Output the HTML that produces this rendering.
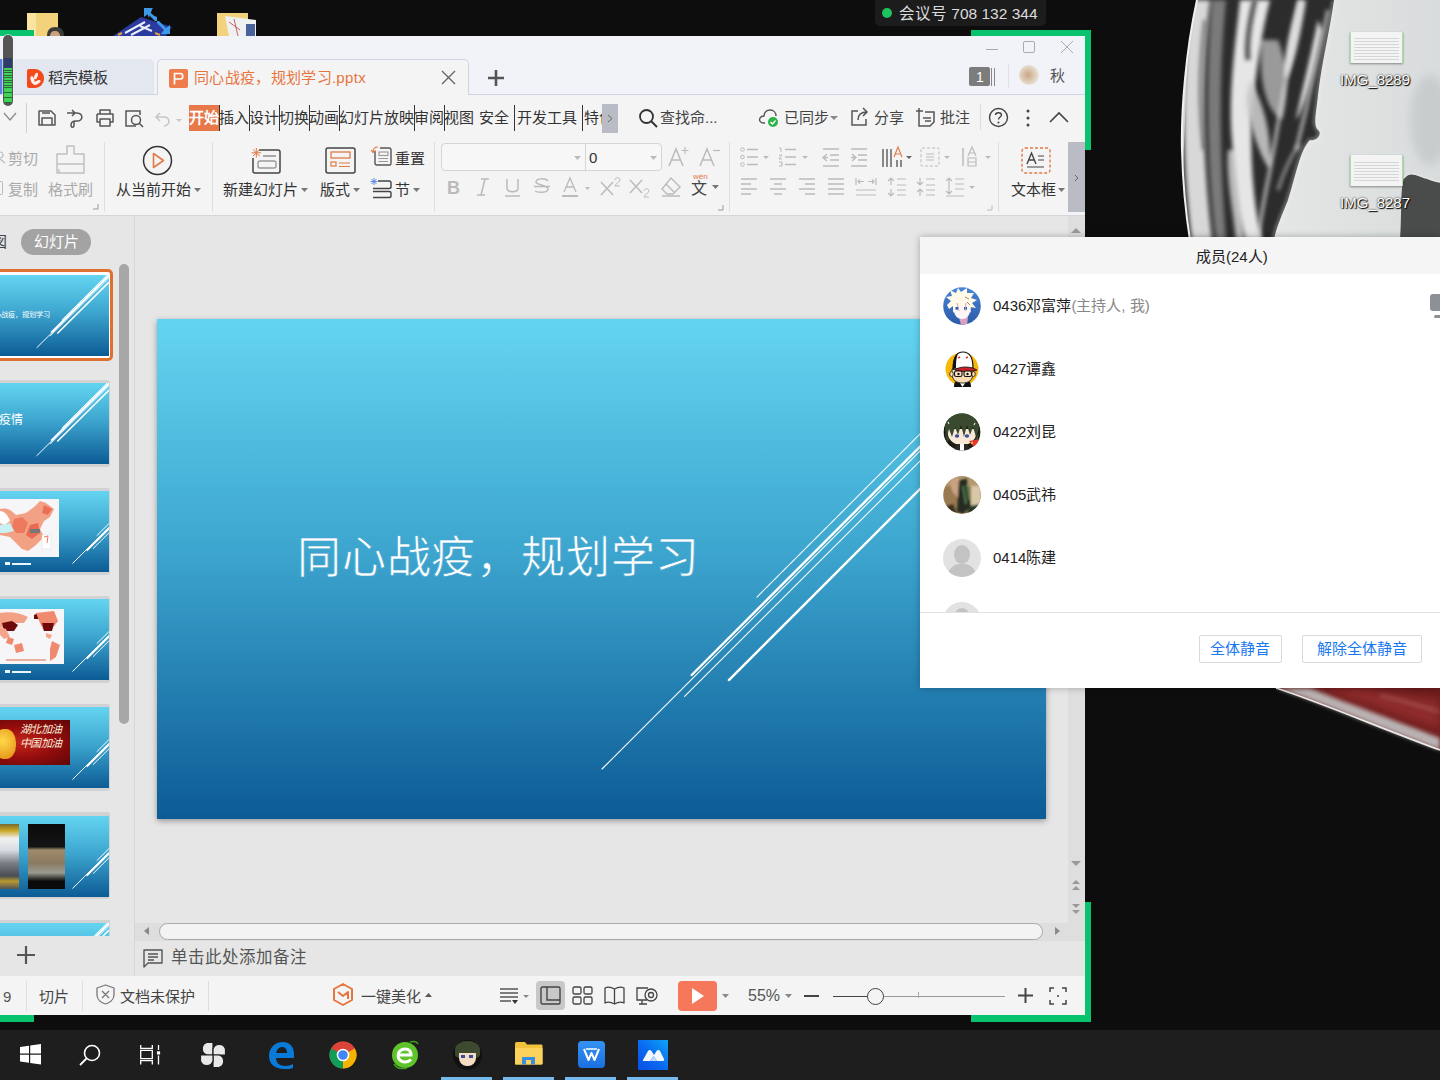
<!DOCTYPE html>
<html lang="zh-CN"><head><meta charset="utf-8">
<style>
*{margin:0;padding:0;box-sizing:border-box}
html,body{width:1440px;height:1080px;overflow:hidden;background:#0d0d0d;font-family:"Liberation Sans",sans-serif;position:relative}
.a{position:absolute}
.t{position:absolute;white-space:nowrap;line-height:1}
svg{position:absolute;overflow:visible}
</style></head><body>

<!-- DESKTOP BG -->
<div class="a" style="left:0;top:0;width:1440px;height:1030px;background:#0d0d0d"></div>
<!-- artwork right -->
<svg style="left:1085px;top:0" width="355" height="1030" viewBox="1085 0 355 1030">
  <defs>
    <clipPath id="sph"><path d="M1197 0 C1186 50 1181 110 1182 150 C1183 190 1186 215 1190 240 L1440 240 L1440 0 Z"/></clipPath>
    <filter id="bl2" x="-20%" y="-20%" width="140%" height="140%"><feGaussianBlur stdDeviation="2"/></filter>
    <filter id="bl4" x="-20%" y="-20%" width="140%" height="140%"><feGaussianBlur stdDeviation="4"/></filter>
    <linearGradient id="lite" x1="0" y1="0" x2="1" y2="0">
      <stop offset="0" stop-color="#c9cccc"/><stop offset="0.4" stop-color="#e4e6e6"/><stop offset="1" stop-color="#d9dcdc"/>
    </linearGradient>
    <linearGradient id="gred" x1="0" y1="0" x2="1" y2="0.4">
      <stop offset="0" stop-color="#cfc9c9"/><stop offset="0.18" stop-color="#9a3a3a"/><stop offset="0.6" stop-color="#8a2424"/><stop offset="1" stop-color="#b04848"/>
    </linearGradient>
  </defs>
  <g clip-path="url(#sph)">
    <rect x="1180" y="0" width="260" height="240" fill="url(#lite)"/>
    <!-- dark streak body -->
    <path d="M1190 0 H1334 C1330 30 1322 60 1318 95 C1316 115 1313 125 1318 130 C1323 134 1316 142 1310 140 C1300 150 1296 175 1288 200 C1282 215 1276 228 1274 240 H1180 Z" fill="#2c2c2c"/>
    <g filter="url(#bl2)">
      <path d="M1192 0 C1183 60 1180 150 1192 240 L1212 240 C1203 160 1200 80 1210 0Z" fill="#d8d8d8"/>
      <path d="M1212 0 C1206 70 1206 160 1216 240 L1226 240 C1220 160 1218 80 1226 0Z" fill="#7a7a7a"/>
      <path d="M1240 0 C1236 40 1228 90 1232 140 C1236 190 1240 215 1246 240 L1262 240 C1252 200 1250 150 1252 110 C1256 70 1262 30 1270 0Z" fill="#e6e6e6"/>
      <path d="M1262 40 C1258 80 1266 110 1282 120 C1290 90 1286 60 1278 40Z" fill="#9a9a9a"/>
      <path d="M1298 0 C1290 30 1282 60 1286 80 C1292 70 1300 40 1306 0Z" fill="#dcdcdc"/>
      <path d="M1318 20 C1310 60 1300 100 1296 120 C1304 110 1314 70 1322 30Z" fill="#e8e8e8"/>
      <path d="M1228 150 C1226 180 1234 215 1236 240 L1244 240 C1240 210 1236 180 1234 150Z" fill="#bcbcbc"/>
    </g>
    <path d="M1334 0 C1330 30 1322 60 1318 95 C1316 115 1313 125 1318 130 C1323 134 1316 142 1310 140 C1300 150 1296 175 1288 200 C1282 215 1276 228 1274 240" stroke="#f4f4f4" stroke-width="1.5" fill="none" filter="url(#bl2)"/>
    <path d="M1328 10 C1322 40 1312 80 1306 110 C1302 125 1300 135 1296 150" stroke="#e0e0e0" stroke-width="2.5" fill="none" filter="url(#bl2)"/>
    <ellipse cx="1430" cy="120" rx="20" ry="45" fill="#b5b9b9" opacity="0.45" filter="url(#bl4)"/>
    <path d="M1400 240 C1402 215 1400 190 1404 178 C1410 170 1418 176 1426 178 C1432 180 1436 182 1440 182 V240Z" fill="#4a4c4c"/>
    <g filter="url(#bl2)" opacity="0.9">
      <path d="M1300 0 C1296 25 1290 55 1286 80 C1280 110 1274 150 1268 180 C1264 200 1260 220 1258 240" stroke="#dedede" stroke-width="3" fill="none"/>
      <path d="M1250 80 C1262 100 1272 130 1270 170 C1262 160 1250 130 1246 100Z" fill="#c8c8c8"/>
      <path d="M1278 190 C1284 170 1294 150 1300 145" stroke="#e0e0e0" stroke-width="2" fill="none"/>
      <path d="M1205 20 C1200 60 1198 100 1204 150" stroke="#5a5a5a" stroke-width="3" fill="none"/>
      <path d="M1255 0 C1250 20 1246 40 1248 60" stroke="#3a3a3a" stroke-width="5" fill="none"/>
    </g>
    <path d="M1404 178 C1410 170 1418 176 1426 178 C1432 180 1436 182 1440 182" stroke="#e6e6e6" stroke-width="1.3" fill="none"/>
    <path d="M1378 240 C1385 222 1395 210 1400 200" stroke="#ddd" stroke-width="1" fill="none"/>
  </g>
  <path d="M1197 0 C1186 50 1181 110 1182 150 C1183 190 1186 215 1190 240" stroke="#f0f0f0" stroke-width="2" fill="none"/>
  <!-- red planet -->
  <path d="M1276 688 C1320 702 1380 728 1440 750 L1440 688 Z" fill="#6e1c1c"/>
  <path d="M1276 688 C1320 702 1380 728 1440 750 L1440 738 C1390 718 1340 700 1310 688Z" fill="#b9b2b2" filter="url(#bl2)"/>
  <path d="M1320 688 C1360 702 1400 716 1440 730 L1440 700 C1410 696 1380 692 1360 688Z" fill="#8e2a2a" filter="url(#bl4)"/>
  <path d="M1380 695 C1400 700 1420 706 1440 712" stroke="#c08080" stroke-width="2" fill="none" opacity="0.6" filter="url(#bl2)"/>
  <path d="M1276 688 C1320 702 1380 728 1440 750" stroke="#e8e8e8" stroke-width="1.8" fill="none"/>
</svg>
<!-- desktop file icons right -->
<div class="a" style="left:1350px;top:32px;width:53px;height:31px;background:#f4f4f4;border-left:1px solid #a6e0a0;border-right:1px solid #a6e0a0;box-shadow:0 1px 2px rgba(0,0,0,.4)"></div>
<div class="a" style="left:1354px;top:36px;width:45px;height:24px;background:repeating-linear-gradient(#f4f4f4 0,#f4f4f4 2px,#d6d6d6 2px,#d6d6d6 3px)"></div>
<div class="t" style="left:1340px;top:72px;font-size:15px;color:#fff;text-shadow:0 0 2px #000,1px 1px 1px #000">IMG_8289</div>
<div class="a" style="left:1350px;top:155px;width:53px;height:31px;background:#f4f4f4;border-left:1px solid #a6e0a0;border-right:1px solid #a6e0a0;box-shadow:0 1px 2px rgba(0,0,0,.4)"></div>
<div class="a" style="left:1354px;top:160px;width:45px;height:23px;background:repeating-linear-gradient(#f4f4f4 0,#f4f4f4 2px,#d6d6d6 2px,#d6d6d6 3px)"></div>
<div class="t" style="left:1340px;top:195px;font-size:15px;color:#fff;text-shadow:0 0 2px #000,1px 1px 1px #000">IMG_8287</div>

<!-- desktop icons top-left -->
<svg style="left:0;top:0" width="300" height="36">
<path d="M27 13 H58 V36 H27Z" fill="#f3d27c"/><path d="M27 13 H36 V36 H27Z" fill="#fbe3a0"/>
<path d="M47 36 C47 30 50 27 55.5 27 C61 27 64 30 64 36Z" fill="#3b3b3b"/><path d="M50 36 C50 33 52 31 55 31 C58 31 60 33 60 36Z" fill="#c9a17a"/>
<path d="M113 36 L141 17 L172 27 L166 36Z" fill="#2b3a9e"/>
<path d="M125 33 L145 22 M131 35 L150 25 M140 26 L152 31" stroke="#e8eef8" stroke-width="2" fill="none"/>
<path d="M118 35 L122 33 M155 33 L160 35" stroke="#e0a040" stroke-width="2"/>
<path d="M145 8 L152 10 L150 14 L157 21 L153 21 L157 21 L157 17 L150 14 L149 18 Z" fill="#3d9ae8"/>
<path d="M144 8 L153 8 L150 12 L157 19 V21 H155 L148 14 L144 17Z" fill="#3d9ae8"/>
<path d="M170 34 L161 34 L164 30 L157 23 V21 H159 L166 28 L170 25Z" fill="#3d9ae8"/>
<path d="M217 13 H248 V36 H217Z" fill="#f3d27c"/>
<path d="M225 16 L256 20 V36 H229Z" fill="#eef0f2"/><path d="M229 22 L240 30 M234 19 L238 36" stroke="#c04040" stroke-width="0.8"/><path d="M246 24 H255 V36 H246Z" fill="#2a4a8a" opacity="0.85"/>
</svg>
<!-- meeting id overlay -->
<div class="a" style="left:875px;top:0;width:171px;height:26px;background:#1c1c1c;border-radius:0 0 5px 5px"></div>
<div class="a" style="left:882px;top:8px;width:10px;height:10px;border-radius:50%;background:#1ec45e"></div>
<div class="t" style="left:899px;top:6px;font-size:15.5px;color:#dcdcdc">会议号 708 132 344</div>

<!-- green share frame -->
<div class="a" style="left:971px;top:30px;width:120px;height:7px;background:#09c26e"></div>
<div class="a" style="left:1085px;top:30px;width:6px;height:120px;background:#09c26e"></div>
<div class="a" style="left:0;top:30px;width:34px;height:7px;background:#09c26e"></div>
<div class="a" style="left:1085px;top:902px;width:6px;height:120px;background:#09c26e"></div>
<div class="a" style="left:971px;top:1015px;width:120px;height:7px;background:#09c26e"></div>
<div class="a" style="left:0;top:1015px;width:34px;height:7px;background:#09c26e"></div>

<!-- WPS WINDOW -->
<div class="a" id="win" style="left:0;top:36px;width:1085px;height:979px;background:#f4f4f4"></div>
<!-- title bar -->
<div class="a" style="left:0;top:36px;width:1085px;height:59px;background:#f1f3f8;border-bottom:1px solid #cdd5e4"></div>

<!-- tabs -->
<div class="a" style="left:13px;top:59px;width:141px;height:35px;background:#e3e7ef;border-radius:5px 5px 0 0"></div>
<div class="a" style="left:27px;top:69px;width:17px;height:19px;background:#f24a1c;border-radius:2px 9px 9px 2px"></div>
<svg style="left:27px;top:69px" width="17" height="19"><ellipse cx="5.5" cy="11" rx="1.8" ry="4" transform="rotate(-15 5.5 11)" fill="#fff" opacity="0.95"/><ellipse cx="9" cy="7" rx="1.6" ry="3.5" transform="rotate(20 9 7)" fill="#fff" opacity="0.9"/><ellipse cx="10" cy="13.5" rx="1.7" ry="4" transform="rotate(60 10 13.5)" fill="#fff" opacity="0.9"/></svg>
<div class="t" style="left:48px;top:70px;font-size:15px;color:#333">稻壳模板</div>
<div class="a" style="left:157px;top:59px;width:312px;height:37px;background:#f4f4f4;border:1px solid #cdd5e4;border-bottom:none;border-radius:5px 5px 0 0"></div>
<div class="a" style="left:169px;top:69px;width:19px;height:19px;background:#ef7d4b;border-radius:2px"></div>
<svg style="left:169px;top:69px" width="19" height="19"><path d="M5.5 15.5 V4.5 H11.5 C14.5 4.5 14.5 10 11.5 10 H5.5" stroke="#fff" stroke-width="1.7" fill="none"/></svg>
<div class="t" style="left:194px;top:70px;font-size:15px;color:#e8743f;letter-spacing:0.32px">同心战疫，规划学习.pptx</div>
<svg style="left:441px;top:70px" width="15" height="15"><path d="M1 1 L14 14 M14 1 L1 14" stroke="#666" stroke-width="1.4"/></svg>
<svg style="left:487px;top:69px" width="18" height="18"><path d="M9 1 V17 M1 9 H17" stroke="#555" stroke-width="2.6"/></svg>
<!-- window controls -->
<div class="a" style="left:986px;top:49px;width:12px;height:1px;background:#aaa"></div>
<div class="a" style="left:1023px;top:41px;width:12px;height:12px;border:1px solid #aaa;border-radius:2px"></div>
<svg style="left:1061px;top:41px" width="12" height="12"><path d="M0 0 L12 12 M12 0 L0 12" stroke="#aaa" stroke-width="1"/></svg>
<div class="a" style="left:969px;top:67px;width:21px;height:19px;background:#7c7c7c;border-radius:2px"></div>
<div class="t" style="left:976px;top:70px;font-size:14px;color:#fff">1</div>
<div class="a" style="left:991px;top:68px;width:1px;height:18px;background:#888"></div>
<div class="a" style="left:994px;top:68px;width:1px;height:18px;background:#888"></div>
<div class="a" style="left:1008px;top:64px;width:1px;height:24px;background:#dde0e6"></div>
<div class="a" style="left:1019px;top:65px;width:20px;height:20px;border-radius:50%;background:radial-gradient(circle at 45% 50%,#caa585,#e9e2d4 70%)"></div>
<div class="t" style="left:1050px;top:68px;font-size:15px;color:#555">秋</div>

<!-- menu row + ribbon -->
<div class="a" style="left:0;top:95px;width:1085px;height:120px;background:#f4f4f4"></div>
<!-- menu row -->
<svg style="left:3px;top:112px" width="14" height="10"><path d="M1 1 L7 8 L13 1" stroke="#888" stroke-width="1.2" fill="none"/></svg>
<div class="a" style="left:26px;top:103px;width:1px;height:30px;background:#d0d0d0"></div>
<svg style="left:37px;top:109px" width="20" height="18"><path d="M2 2 H14 L18 6 V16 H2 Z M5 16 V9 H15 V16 M5 4 H13" stroke="#555" stroke-width="1.5" fill="none" stroke-linejoin="round"/></svg>
<svg style="left:66px;top:109px" width="20" height="19"><path d="M1 4 H9 M6 1 L9 4 L6 7 M9 4 C18 3 18 13 10 12 C6 12 5 14 5 16 C5 19 8 19 8 16 V12" stroke="#555" stroke-width="1.5" fill="none"/></svg>
<svg style="left:95px;top:109px" width="20" height="18"><path d="M5 5 V1 H15 V5 M2 5 H18 V13 H15 M5 13 H2 V5 M5 10 H15 V17 H5 Z" stroke="#555" stroke-width="1.5" fill="none" stroke-linejoin="round"/></svg>
<svg style="left:124px;top:109px" width="21" height="19"><path d="M12 17 H2 V2 H16 V6" stroke="#555" stroke-width="1.5" fill="none"/><circle cx="12" cy="11" r="4.5" stroke="#555" stroke-width="1.5" fill="none"/><path d="M15 14 L19 18" stroke="#555" stroke-width="1.6"/></svg>
<svg style="left:155px;top:111px" width="30" height="16"><path d="M5 2 L1 6 L5 10 M1 6 H9 C15 6 16 14 9 15" stroke="#c6c6c6" stroke-width="1.5" fill="none"/><path d="M21 8 H27 L24 11Z" fill="#c6c6c6"/></svg>
<div class="a" style="left:189px;top:105px;width:30px;height:26px;background:#e8784a"></div>
<div class="t" style="left:189px;top:110px;font-size:15px;color:#fff;font-weight:bold">开始</div>
<div class="t" style="left:219px;top:110px;font-size:15px;color:#333">插入</div>
<div class="t" style="left:249px;top:110px;font-size:15px;color:#333">设计</div>
<div class="t" style="left:279px;top:110px;font-size:15px;color:#333">切换</div>
<div class="t" style="left:309px;top:110px;font-size:15px;color:#333">动画</div>
<div class="t" style="left:339px;top:110px;font-size:15px;color:#333">幻灯片放映</div>
<div class="t" style="left:414px;top:110px;font-size:15px;color:#333">审阅</div>
<div class="t" style="left:444px;top:110px;font-size:15px;color:#333">视图</div>
<div class="t" style="left:479px;top:110px;font-size:15px;color:#333">安全</div>
<div class="t" style="left:517px;top:110px;font-size:15px;color:#333">开发工具</div>
<div class="a" style="left:583px;top:105px;width:19px;height:26px;overflow:hidden"><div class="t" style="left:1px;top:5px;font-size:15px;color:#333">特色</div></div>
<div class="a" style="left:219px;top:105px;width:1px;height:26px;background:#333"></div>
<div class="a" style="left:249px;top:105px;width:1px;height:26px;background:#333"></div>
<div class="a" style="left:279px;top:105px;width:1px;height:26px;background:#333"></div>
<div class="a" style="left:309px;top:105px;width:1px;height:26px;background:#333"></div>
<div class="a" style="left:339px;top:105px;width:1px;height:26px;background:#333"></div>
<div class="a" style="left:414px;top:105px;width:1px;height:26px;background:#333"></div>
<div class="a" style="left:444px;top:105px;width:1px;height:26px;background:#333"></div>
<div class="a" style="left:514px;top:105px;width:1px;height:26px;background:#333"></div>
<div class="a" style="left:582px;top:105px;width:1px;height:26px;background:#333"></div>
<div class="a" style="left:602px;top:104px;width:16px;height:29px;background:#b9bcc4"></div>
<svg style="left:607px;top:114px" width="6" height="9"><path d="M1 1 L5 4.5 L1 8" stroke="#666" stroke-width="1" fill="none"/></svg>
<svg style="left:638px;top:108px" width="22" height="22"><circle cx="8.5" cy="8.5" r="6.5" stroke="#333" stroke-width="1.8" fill="none"/><path d="M13 13 L19 19" stroke="#333" stroke-width="2"/></svg>
<div class="t" style="left:660px;top:110px;font-size:15px;color:#444">查找命...</div>
<svg style="left:759px;top:108px" width="22" height="20"><path d="M6 15 H4 C1 15 0 12 1 10 C2 8 4 8 5 8 C5 4 8 2 11 2 C15 2 17 5 17 8" stroke="#555" stroke-width="1.4" fill="none"/><circle cx="14" cy="14" r="5" fill="#2db34a"/><path d="M11.5 14 L13.5 16 L16.5 12.5" stroke="#fff" stroke-width="1.4" fill="none"/></svg>
<div class="t" style="left:784px;top:110px;font-size:15px;color:#444">已同步</div>
<svg style="left:830px;top:116px" width="8" height="5"><path d="M0 0 H8 L4 4Z" fill="#888"/></svg>
<svg style="left:850px;top:107px" width="20" height="20"><path d="M8 4 H2 V18 H16 V12 M8 13 C8 7 12 5 17 5 M13 1 L17 5 L13 9" stroke="#555" stroke-width="1.5" fill="none"/></svg>
<div class="t" style="left:874px;top:110px;font-size:15px;color:#444">分享</div>
<svg style="left:916px;top:107px" width="22" height="22"><path d="M3 6 V19 H14 L18 15 V5 H9 M3 1 V9 M0 4 H7 M7 11 H15 M9 14 H15" stroke="#555" stroke-width="1.5" fill="none"/></svg>
<div class="t" style="left:940px;top:110px;font-size:15px;color:#444">批注</div>
<div class="a" style="left:980px;top:104px;width:1px;height:26px;background:#dcdcdc"></div>
<svg style="left:988px;top:107px" width="21" height="21"><circle cx="10.5" cy="10.5" r="9" stroke="#444" stroke-width="1.4" fill="none"/><path d="M7.5 8 C7.5 5 13.5 5 13.5 8 C13.5 10 10.5 10 10.5 12.5" stroke="#444" stroke-width="1.4" fill="none"/><circle cx="10.5" cy="15.5" r="1" fill="#444"/></svg>
<svg style="left:1026px;top:108px" width="4" height="20"><circle cx="2" cy="3" r="1.5" fill="#444"/><circle cx="2" cy="10" r="1.5" fill="#444"/><circle cx="2" cy="17" r="1.5" fill="#444"/></svg>
<svg style="left:1049px;top:111px" width="20" height="12"><path d="M1 11 L10 2 L19 11" stroke="#444" stroke-width="1.6" fill="none"/></svg>


<!-- RIBBON -->
<!-- group1 clipboard -->
<svg style="left:0px;top:151px" width="6" height="14"><circle cx="0" cy="4" r="3" stroke="#bbb" stroke-width="1.2" fill="none"/><path d="M0 8 L5 12" stroke="#bbb" stroke-width="1.2"/></svg>
<div class="t" style="left:8px;top:151px;font-size:15px;color:#aaa">剪切</div>
<div class="a" style="left:0px;top:181px;width:3px;height:14px;border:1.2px solid #bbb;border-left:none;border-radius:0 2px 2px 0"></div>
<div class="t" style="left:8px;top:182px;font-size:15px;color:#aaa">复制</div>
<svg style="left:55px;top:145px" width="31" height="30"><path d="M12 1 H19 V9 H29 V19 H2 V9 H12 Z M2 19 V28 H29 V19 M4 28 V24" stroke="#c0c0c0" stroke-width="1.5" fill="none" stroke-linejoin="round"/></svg>
<div class="t" style="left:48px;top:182px;font-size:15px;color:#aaa">格式刷</div>
<svg style="left:93px;top:204px" width="6" height="6"><path d="M5 0 V5 H0" stroke="#999" stroke-width="1" fill="none"/></svg>
<div class="a" style="left:104px;top:142px;width:1px;height:70px;background:#dedede"></div>
<!-- group2 -->
<svg style="left:142px;top:145px" width="31" height="31"><circle cx="15.5" cy="15.5" r="14" stroke="#333" stroke-width="1.5" fill="none"/><path d="M11.5 8.5 L21.5 15.5 L11.5 22.5 Z" stroke="#e07a47" stroke-width="1.6" fill="none" stroke-linejoin="round"/></svg>
<div class="t" style="left:116px;top:182px;font-size:15px;color:#333">从当前开始</div>
<svg style="left:194px;top:188px" width="7" height="4"><path d="M0 0 H7 L3.5 4Z" fill="#777"/></svg>
<div class="a" style="left:212px;top:142px;width:1px;height:70px;background:#dedede"></div>
<!-- group3 -->
<svg style="left:249px;top:146px" width="34" height="29"><path d="M10 4 H29 Q31 4 31 6 V25 Q31 27 29 27 H6 Q4 27 4 25 V12" stroke="#444" stroke-width="1.5" fill="none"/><path d="M14 10 H27" stroke="#777" stroke-width="1.2"/><rect x="9" y="15" width="18" height="7" rx="2" stroke="#999" stroke-width="1.4" fill="none"/><path d="M7.3 2 V11.6 M2.5 6.8 H12.1 M3.9 3.4 L10.7 10.2 M10.7 3.4 L3.9 10.2" stroke="#e07a47" stroke-width="1"/></svg>
<div class="t" style="left:223px;top:182px;font-size:15px;color:#333">新建幻灯片</div>
<svg style="left:301px;top:188px" width="7" height="4"><path d="M0 0 H7 L3.5 4Z" fill="#777"/></svg>
<svg style="left:325px;top:147px" width="31" height="27"><rect x="1" y="1" width="29" height="25" rx="2" stroke="#444" stroke-width="1.5" fill="none"/><rect x="6" y="5" width="19" height="6" stroke="#e07a47" stroke-width="1.3" fill="none"/><rect x="6" y="15" width="5" height="4" stroke="#e07a47" stroke-width="1.2" fill="none"/><path d="M14 16 H25 M14 19.5 H25" stroke="#e07a47" stroke-width="1.2"/></svg>
<div class="t" style="left:320px;top:182px;font-size:15px;color:#333">版式</div>
<svg style="left:353px;top:188px" width="7" height="4"><path d="M0 0 H7 L3.5 4Z" fill="#777"/></svg>
<svg style="left:370px;top:145px" width="24" height="22"><path d="M5 6 V18 Q5 20 7 20 H20 Q21 20 21 18 V5 Q21 3 19 3 H10" stroke="#555" stroke-width="1.4" fill="none"/><rect x="9" y="7" width="9" height="3.5" stroke="#999" stroke-width="1.1" fill="none"/><path d="M8.5 13.5 H18 M8.5 16.5 H18" stroke="#999" stroke-width="1.1"/><path d="M8 2 C5 2 3 3.5 3 7 M1 5 L3 7.5 L5.5 5.5" stroke="#e07a47" stroke-width="1.2" fill="none"/></svg>
<div class="t" style="left:395px;top:151px;font-size:15px;color:#333">重置</div>
<svg style="left:370px;top:177px" width="24" height="22"><path d="M8 4 H19 Q21 4 21 6 V10 Q21 11.5 19 11.5 H3 M3 14.5 H19 Q21 14.5 21 16 V19 Q21 20.5 19 20.5 H3" stroke="#444" stroke-width="1.4" fill="none"/><path d="M4 1 V8 M0.5 4.5 H7.5 M1.5 2 L6.5 7 M6.5 2 L1.5 7" stroke="#4a82e0" stroke-width="0.9"/></svg>
<div class="t" style="left:395px;top:182px;font-size:15px;color:#333">节</div>
<svg style="left:413px;top:188px" width="7" height="4"><path d="M0 0 H7 L3.5 4Z" fill="#777"/></svg>
<div class="a" style="left:434px;top:142px;width:1px;height:70px;background:#dedede"></div>
<!-- group4 font -->
<div class="a" style="left:441px;top:143px;width:221px;height:28px;border:1px solid #d5d5d5;border-radius:4px;background:#f7f7f7"></div>
<div class="a" style="left:585px;top:144px;width:1px;height:26px;background:#d5d5d5"></div>
<svg style="left:574px;top:156px" width="7" height="4"><path d="M0 0 H7 L3.5 4Z" fill="#bbb"/></svg>
<svg style="left:650px;top:156px" width="7" height="4"><path d="M0 0 H7 L3.5 4Z" fill="#bbb"/></svg>
<div class="t" style="left:589px;top:150px;font-size:15px;color:#333">0</div>
<svg style="left:668px;top:146px" width="22" height="22"><path d="M1 20 L8 3 L15 20 M4 14 H12" stroke="#bbb" stroke-width="1.5" fill="none"/><path d="M17 1 V8 M13.5 4.5 H20.5" stroke="#bbb" stroke-width="1.2"/></svg>
<svg style="left:699px;top:146px" width="22" height="22"><path d="M1 20 L8 3 L15 20 M4 14 H12" stroke="#bbb" stroke-width="1.5" fill="none"/><path d="M14 4.5 H21" stroke="#bbb" stroke-width="1.2"/></svg>
<div class="t" style="left:447px;top:179px;font-size:18px;font-weight:bold;color:#bbb">B</div>
<svg style="left:476px;top:178px" width="14" height="18"><path d="M5 1 H13 M1 17 H9 M9 1 L5 17" stroke="#bbb" stroke-width="1.5" fill="none"/></svg>
<svg style="left:504px;top:178px" width="17" height="19"><path d="M3 1 V10 C3 15 14 15 14 10 V1 M1 18 H16" stroke="#bbb" stroke-width="1.5" fill="none"/></svg>
<svg style="left:533px;top:178px" width="18" height="18"><path d="M15 3 C13 0 3 0 3 4 C3 7 15 7 15 11 C15 15 5 15 2 13 M1 8.5 H17" stroke="#bbb" stroke-width="1.5" fill="none"/></svg>
<svg style="left:561px;top:177px" width="30" height="21"><path d="M3 15 L9 1 L15 15 M5 10 H13" stroke="#bbb" stroke-width="1.3" fill="none"/><path d="M1 19 H17" stroke="#bbb" stroke-width="2"/><path d="M24 10 H29 L26.5 13Z" fill="#bbb"/></svg>
<svg style="left:600px;top:177px" width="22" height="20"><path d="M1 5 L13 18 M13 5 L1 18" stroke="#bbb" stroke-width="1.5"/><path d="M15 3 C15 0 20 0 20 3 C20 5 15 7 15 9 H20" stroke="#bbb" stroke-width="1" fill="none"/></svg>
<svg style="left:629px;top:177px" width="22" height="21"><path d="M1 3 L13 16 M13 3 L1 16" stroke="#bbb" stroke-width="1.5"/><path d="M15 14 C15 11 20 11 20 14 C20 16 15 18 15 20 H20" stroke="#bbb" stroke-width="1" fill="none"/></svg>
<svg style="left:660px;top:177px" width="22" height="20"><path d="M11 1 L20 10 L13 17 H7 L2 12 Z M6 7 L14 15 M2 19 H20" stroke="#bbb" stroke-width="1.4" fill="none"/></svg>
<div class="t" style="left:693px;top:173px;font-size:8px;color:#e07a47">wén</div>
<div class="t" style="left:691px;top:181px;font-size:16px;color:#444">文</div>
<svg style="left:712px;top:185px" width="7" height="4"><path d="M0 0 H7 L3.5 4Z" fill="#777"/></svg>
<svg style="left:718px;top:205px" width="6" height="6"><path d="M5 0 V5 H0" stroke="#999" stroke-width="1" fill="none"/></svg>
<div class="a" style="left:729px;top:142px;width:1px;height:70px;background:#dedede"></div>
<!-- group5 paragraph -->
<svg style="left:740px;top:147px" width="32" height="20"><circle cx="2.5" cy="2.5" r="1.8" stroke="#bbb" fill="none"/><circle cx="2.5" cy="10" r="1.8" stroke="#bbb" fill="none"/><circle cx="2.5" cy="17.5" r="1.8" stroke="#bbb" fill="none"/><path d="M7 2.5 H18 M7 10 H18 M7 17.5 H18" stroke="#bbb" stroke-width="1.4"/><path d="M23 9 H29 L26 12Z" fill="#bbb"/></svg>
<svg style="left:778px;top:147px" width="32" height="20"><path d="M1 1 H3 V5 M1 8 H4 L1 12 H4 M1 15 H4 V19 H1 M3 17 H4" stroke="#bbb" stroke-width="1" fill="none"/><path d="M7 2.5 H18 M7 10 H18 M7 17.5 H18" stroke="#bbb" stroke-width="1.4"/><path d="M24 9 H30 L27 12Z" fill="#bbb"/></svg>
<svg style="left:822px;top:148px" width="18" height="19"><path d="M1 1 H17 M8 7 H17 M8 12 H17 M1 18 H17 M5 6 L1 9.5 L5 13 M1 9.5 H6" stroke="#bbb" stroke-width="1.3" fill="none"/></svg>
<svg style="left:850px;top:148px" width="18" height="19"><path d="M1 1 H17 M8 7 H17 M8 12 H17 M1 18 H17 M2 6 L6 9.5 L2 13 M1 9.5 H6" stroke="#bbb" stroke-width="1.3" fill="none"/></svg>
<svg style="left:881px;top:146px" width="33" height="22"><path d="M2 3 V21 M6 3 V21 M10 3 V21 M16 14 V21 M20 14 V21" stroke="#666" stroke-width="1.5"/><path d="M13 11 L17 1 L21 11 M14.5 8 H19.5" stroke="#e07a47" stroke-width="1.1" fill="none"/><path d="M25 10 H31 L28 13Z" fill="#666"/></svg>
<svg style="left:920px;top:147px" width="31" height="20"><rect x="1" y="1" width="18" height="18" rx="1" stroke="#bbb" stroke-dasharray="3 2" fill="none"/><path d="M6 7 H14 M6 10 H14 M6 13 H14" stroke="#bbb" stroke-width="1.2"/><path d="M24 9 H30 L27 12Z" fill="#bbb"/></svg>
<svg style="left:961px;top:146px" width="32" height="21"><path d="M2 2 V20" stroke="#bbb" stroke-width="1.5"/><path d="M7 10 L11 1 L15 10 M8.5 7 H13.5 M7 12 H15 V20 H7 Z M7 16 H15" stroke="#bbb" stroke-width="1.2" fill="none"/><path d="M24 10 H30 L27 13Z" fill="#bbb"/></svg>
<svg style="left:740px;top:178px" width="18" height="18"><path d="M1 1 H17 M1 6 H11 M1 11 H17 M1 16 H11" stroke="#bbb" stroke-width="1.4"/></svg>
<svg style="left:769px;top:178px" width="18" height="18"><path d="M1 1 H17 M5 6 H13 M1 11 H17 M5 16 H13" stroke="#bbb" stroke-width="1.4"/></svg>
<svg style="left:798px;top:178px" width="18" height="18"><path d="M1 1 H17 M7 6 H17 M1 11 H17 M7 16 H17" stroke="#bbb" stroke-width="1.4"/></svg>
<svg style="left:827px;top:178px" width="18" height="18"><path d="M1 1 H17 M1 6 H17 M1 11 H17 M1 16 H17" stroke="#bbb" stroke-width="1.4"/></svg>
<svg style="left:855px;top:177px" width="22" height="20"><path d="M1 1 V8 M21 1 V8 M3 4.5 H9 M5 2.5 L3 4.5 L5 6.5 M13 4.5 H19 M17 2.5 L19 4.5 L17 6.5 M1 13 H21 M1 18 H21" stroke="#bbb" stroke-width="1.2" fill="none"/></svg>
<svg style="left:887px;top:177px" width="20" height="20"><path d="M4 1 V8 M1 4 L4 1 L7 4 M4 12 V19 M1 16 L4 19 L7 16 M10 2 H19 M10 8 H19 M10 13 H19 M10 18 H19" stroke="#bbb" stroke-width="1.2" fill="none"/></svg>
<svg style="left:916px;top:177px" width="20" height="20"><path d="M4 1 V8 M1 5 L4 8 L7 5 M4 12 V19 M1 15 L4 12 L7 15 M10 2 H19 M10 8 H19 M10 13 H19 M10 18 H19" stroke="#bbb" stroke-width="1.2" fill="none"/></svg>
<svg style="left:945px;top:177px" width="32" height="20"><path d="M4 1 V17 M1 4 L4 1 L7 4 M1 14 L4 17 L7 14 M10 2 H19 M10 7 H19 M10 12 H19 M1 19 H19" stroke="#bbb" stroke-width="1.2" fill="none"/><path d="M24 9 H30 L27 12Z" fill="#bbb"/></svg>
<svg style="left:987px;top:205px" width="6" height="6"><path d="M5 0 V5 H0" stroke="#bbb" stroke-width="1" fill="none"/></svg>
<div class="a" style="left:998px;top:142px;width:1px;height:70px;background:#dedede"></div>
<!-- group6 textbox -->
<svg style="left:1021px;top:147px" width="30" height="27"><rect x="1" y="1" width="28" height="25" rx="3" stroke="#e07a47" stroke-width="1.4" stroke-dasharray="3 2" fill="none"/><path d="M6 17 L10.5 6 L15 17 M7.5 13 H13.5" stroke="#444" stroke-width="1.4" fill="none"/><path d="M17 9 H23 M17 13 H23 M6 20 H23" stroke="#444" stroke-width="1.2"/></svg>
<div class="t" style="left:1011px;top:182px;font-size:15px;color:#333">文本框</div>
<svg style="left:1058px;top:188px" width="7" height="4"><path d="M0 0 H7 L3.5 4Z" fill="#777"/></svg>
<div class="a" style="left:1068px;top:142px;width:17px;height:70px;background:#b9bcc4"></div>
<svg style="left:1074px;top:174px" width="5" height="8"><path d="M1 1 L4 4 L1 7" stroke="#666" stroke-width="1" fill="none"/></svg>

<!-- main area -->
<div class="a" style="left:0;top:215px;width:1085px;height:761px;background:#e6e6e6;border-top:1px solid #d6d6d6"></div>

<!-- slide -->
<div class="a" style="left:157px;top:319px;width:889px;height:500px;background:linear-gradient(#64d5f1,#3ea7d0 45%,#0c5b95);box-shadow:0 2px 6px rgba(0,0,0,.35)"></div>

<!-- status bar -->
<div class="a" style="left:0;top:976px;width:1085px;height:39px;background:#f4f4f4"></div>


<!-- LEFT PANE -->
<div class="a" style="left:134px;top:216px;width:1px;height:760px;background:#d6d6d6"></div>
<div class="t" style="left:-8px;top:234px;font-size:15px;color:#444">図</div>
<div class="a" style="left:21px;top:229px;width:70px;height:26px;border-radius:13px;background:#a3a3a3"></div>
<div class="t" style="left:34px;top:234px;font-size:15px;color:#fff">幻灯片</div>
<div class="a" style="left:119px;top:264px;width:10px;height:460px;border-radius:5px;background:#a7a7a7"></div>
<!-- thumbnails -->
<div class="a" style="left:-10px;top:269px;width:123px;height:92px;border:3px solid #e0702f;border-radius:5px;background:#fff"></div>
<div class="a" style="left:0;top:380px;width:110px;height:87px;background:#d2d2d2;border-radius:0 3px 3px 0"></div>
<div class="a" style="left:0;top:488px;width:110px;height:87px;background:#d2d2d2;border-radius:0 3px 3px 0"></div>
<div class="a" style="left:0;top:596px;width:110px;height:87px;background:#d2d2d2;border-radius:0 3px 3px 0"></div>
<div class="a" style="left:0;top:704px;width:110px;height:87px;background:#d2d2d2;border-radius:0 3px 3px 0"></div>
<div class="a" style="left:0;top:812px;width:110px;height:87px;background:#d2d2d2;border-radius:0 3px 3px 0"></div>
<div class="a" style="left:0;top:920px;width:110px;height:16px;background:#d2d2d2"></div>
<div class="a" style="left:-36.5px;top:275px;width:145px;height:81px;overflow:hidden"><div class="a" style="left:0;top:0;width:145px;height:81px;background:linear-gradient(#64d5f1,#3ea7d0 45%,#0c5b95)"></div><svg style="left:0;top:0" width="145" height="81" viewBox="0 0 889 500" preserveAspectRatio="none"><g stroke="#fff" fill="none"><path d="M445 450 L889 6" stroke-width="6"/><path d="M534.7 356 L889 1.7" stroke-width="12"/><path d="M527.6 377.4 L889 16" stroke-width="6"/><path d="M571.9 361.1 L889 44" stroke-width="9"/><path d="M599.9 278.1 L889 -11" stroke-width="6"/></g></svg><div class="t" style="left:23px;top:36px;font-size:7.2px;color:#fff">同心战疫，规划学习</div></div><div class="a" style="left:-36.5px;top:383px;width:145px;height:81px;overflow:hidden"><div class="a" style="left:0;top:0;width:145px;height:81px;background:linear-gradient(#64d5f1,#3ea7d0 45%,#0c5b95)"></div><svg style="left:0;top:0" width="145" height="81" viewBox="0 0 889 500" preserveAspectRatio="none"><g stroke="#fff" fill="none"><path d="M445 450 L889 6" stroke-width="6"/><path d="M534.7 356 L889 1.7" stroke-width="12"/><path d="M527.6 377.4 L889 16" stroke-width="6"/><path d="M571.9 361.1 L889 44" stroke-width="9"/><path d="M599.9 278.1 L889 -11" stroke-width="6"/></g></svg><div class="t" style="left:23.5px;top:31px;font-size:12px;color:#fff">看疫情</div></div><div class="a" style="left:-36.5px;top:491px;width:145px;height:81px;overflow:hidden"><div class="a" style="left:0;top:0;width:145px;height:81px;background:linear-gradient(#64d5f1,#3ea7d0 45%,#0c5b95)"></div><svg style="left:0;top:0" width="145" height="81" viewBox="0 0 889 500" preserveAspectRatio="none"><g stroke="#fff" fill="none"><path d="M665 448 L889 224" stroke-width="6"/><path d="M752 368 L889 231" stroke-width="12"/><path d="M791 356 L889 258" stroke-width="6"/><path d="M814 276 L889 201" stroke-width="6"/></g></svg><div class="a" style="left:36.5px;top:7.5px;width:59px;height:58px;background:#f6f6f8;overflow:hidden"><svg style="left:0;top:0" width="59" height="58"><path d="M0 10 C8 8 12 12 16 16 L26 14 L34 8 L40 2 L46 4 L54 10 L50 18 L44 22 L40 30 L44 38 L36 46 L28 52 L22 50 L16 44 L10 38 L0 36Z" fill="#f3a184"/><path d="M14 20 L22 18 L28 24 L24 34 L16 34 L12 28Z" fill="#ee7a5e"/><path d="M30 26 L38 24 L40 34 L32 40 L26 36Z" fill="#e96a52"/><path d="M44 6 L52 10 L48 16 L42 14Z" fill="#ea6f55"/><path d="M0 12 C4 12 8 16 10 22 L4 26 L0 24Z" fill="#fff"/><path d="M0 26 L10 24 L14 32 L6 34 L0 34Z" fill="#c8f1f4"/><rect x="30" y="30" width="10" height="4" fill="#777"/><rect x="42" y="36" width="9" height="14" fill="#fff" stroke="#ddd" stroke-width="0.5"/><path d="M44 38 L48 37 L47 44" stroke="#ee7a5e" stroke-width="1" fill="none"/></svg></div><div class="a" style="left:41px;top:71px;width:5px;height:3px;background:#eaf6fb"></div><div class="a" style="left:48px;top:71.5px;width:19px;height:2px;background:#eaf6fb"></div></div><div class="a" style="left:-36.5px;top:599px;width:145px;height:81px;overflow:hidden"><div class="a" style="left:0;top:0;width:145px;height:81px;background:linear-gradient(#64d5f1,#3ea7d0 45%,#0c5b95)"></div><svg style="left:0;top:0" width="145" height="81" viewBox="0 0 889 500" preserveAspectRatio="none"><g stroke="#fff" fill="none"><path d="M665 448 L889 224" stroke-width="6"/><path d="M752 368 L889 231" stroke-width="12"/><path d="M791 356 L889 258" stroke-width="6"/><path d="M814 276 L889 201" stroke-width="6"/></g></svg><div class="a" style="left:36.5px;top:9.5px;width:64px;height:55px;background:#f6f6f8;overflow:hidden"><svg style="left:0;top:0" width="64" height="55"><path d="M0 4 C10 2 20 4 28 8 L24 14 L16 14 L8 20 L0 18Z" fill="#f3a184"/><path d="M2 14 L12 12 L18 16 L14 22 L4 22Z" fill="#6e0a0a"/><path d="M0 18 L6 20 L10 28 L4 30 L0 26Z" fill="#f4a58a"/><path d="M8 28 L14 30 L12 36 L6 34Z" fill="#f08a6e"/><path d="M14 36 L22 34 L24 42 L16 44Z" fill="#f08a6e"/><path d="M34 6 L38 4 L40 10 L34 10Z" fill="#6e0a0a"/><path d="M36 4 L54 2 L58 12 L52 20 L44 22 L40 14Z" fill="#f08a6e"/><path d="M42 14 L54 14 L52 22 L44 22Z" fill="#6e0a0a"/><path d="M46 24 L52 26 L50 30 L46 28Z" fill="#f4a58a"/><path d="M52 32 L60 36 L56 48 L50 52 L50 40Z" fill="#f08a6e"/><rect x="6" y="50" width="40" height="2" fill="#e9b0a0"/></svg></div><div class="a" style="left:41px;top:71px;width:5px;height:3px;background:#eaf6fb"></div><div class="a" style="left:48px;top:71.5px;width:19px;height:2px;background:#eaf6fb"></div></div><div class="a" style="left:-36.5px;top:707px;width:145px;height:81px;overflow:hidden"><div class="a" style="left:0;top:0;width:145px;height:81px;background:linear-gradient(#64d5f1,#3ea7d0 45%,#0c5b95)"></div><svg style="left:0;top:0" width="145" height="81" viewBox="0 0 889 500" preserveAspectRatio="none"><g stroke="#fff" fill="none"><path d="M665 448 L889 224" stroke-width="6"/><path d="M752 368 L889 231" stroke-width="12"/><path d="M791 356 L889 258" stroke-width="6"/><path d="M814 276 L889 201" stroke-width="6"/></g></svg><div class="a" style="left:36.5px;top:13px;width:70px;height:45px;background:radial-gradient(ellipse at 30% 50%,#c4281a 0,#9a0e0e 45%,#5e0606 100%)"></div><div class="a" style="left:30px;top:22px;width:22px;height:30px;border-radius:45%;background:radial-gradient(circle at 40% 40%,#ffd84a,#e08a10)"></div><div class="t" style="left:56px;top:17px;font-size:11px;color:#f6eedd;font-style:italic;letter-spacing:-0.5px">湖北加油</div><div class="t" style="left:56px;top:31px;font-size:11px;color:#f6eedd;font-style:italic;letter-spacing:-0.5px">中国加油</div></div><div class="a" style="left:-36.5px;top:816px;width:145px;height:81px;overflow:hidden"><div class="a" style="left:0;top:0;width:145px;height:81px;background:linear-gradient(#64d5f1,#3ea7d0 45%,#0c5b95)"></div><svg style="left:0;top:0" width="145" height="81" viewBox="0 0 889 500" preserveAspectRatio="none"><g stroke="#fff" fill="none"><path d="M665 448 L889 224" stroke-width="6"/><path d="M752 368 L889 231" stroke-width="12"/><path d="M791 356 L889 258" stroke-width="6"/><path d="M814 276 L889 201" stroke-width="6"/></g></svg><div class="a" style="left:36.5px;top:8px;width:19px;height:65px;background:linear-gradient(#7a6a30 0,#c9a520 10%,#f0f0f0 22%,#d8dde2 40%,#7a7f86 60%,#4a4d52 80%,#b89a30 88%,#555 100%)"></div><div class="a" style="left:64.5px;top:8px;width:37px;height:65px;background:linear-gradient(#0b0b0b 0,#141414 35%,#a08a6a 40%,#8a7a62 60%,#9a9a90 75%,#0b0b0b 88%)"></div></div><div class="a" style="left:-36.5px;top:923px;width:145px;height:13px;overflow:hidden"><div class="a" style="left:0;top:0;width:145px;height:81px;background:linear-gradient(#64d5f1,#3ea7d0 45%,#0c5b95)"></div><svg style="left:0;top:0" width="145" height="81" viewBox="0 0 889 500" preserveAspectRatio="none"><g stroke="#fff" fill="none"><path d="M445 450 L889 6" stroke-width="6"/><path d="M534.7 356 L889 1.7" stroke-width="12"/><path d="M527.6 377.4 L889 16" stroke-width="6"/><path d="M571.9 361.1 L889 44" stroke-width="9"/><path d="M599.9 278.1 L889 -11" stroke-width="6"/></g></svg></div>
<svg style="left:16px;top:945px" width="20" height="20"><path d="M10 1 V19 M1 10 H19" stroke="#555" stroke-width="2.2"/></svg>

<!-- SLIDE content -->
<div class="a" style="left:157px;top:319px;width:889px;height:500px;overflow:hidden">
<svg style="left:0;top:0" width="889" height="500"><g stroke="#fff" fill="none" stroke-linecap="round">
<path d="M445 450 L889 6" stroke-width="1.1"/>
<path d="M534.7 356 L889 1.7" stroke-width="2.4"/>
<path d="M527.6 377.4 L889 16" stroke-width="1.1"/>
<path d="M571.9 361.1 L889 44" stroke-width="2.4"/>
<path d="M599.9 278.1 L889 -11" stroke-width="1.1"/>
</g></svg>
<div class="t" style="left:140px;top:217px;font-size:44px;color:#fff;font-weight:300;letter-spacing:0.8px;-webkit-text-stroke:0.7px #3ca4ce">同心战疫，规划学习</div>
</div>

<!-- vertical scrollbar right -->
<div class="a" style="left:1068px;top:216px;width:17px;height:707px;background:#dedede"></div>
<svg style="left:1070px;top:226px" width="12" height="8"><path d="M1 7 H11 L6 2Z" fill="#999"/></svg>
<svg style="left:1070px;top:860px" width="12" height="8"><path d="M1 1 H11 L6 6Z" fill="#999"/></svg>
<svg style="left:1070px;top:879px" width="12" height="12"><path d="M2 5 H10 L6 1Z M2 11 H10 L6 7Z" fill="#999"/></svg>
<svg style="left:1070px;top:903px" width="12" height="12"><path d="M2 1 H10 L6 5Z M2 7 H10 L6 11Z" fill="#999"/></svg>
<!-- horizontal scrollbar -->
<div class="a" style="left:135px;top:923px;width:950px;height:18px;background:#dedede"></div>
<div class="a" style="left:159px;top:923px;width:884px;height:17px;border-radius:9px;background:#f3f3f3;border:1px solid #a8a8a8"></div>
<svg style="left:143px;top:926px" width="8" height="10"><path d="M6 1 V9 L1 5Z" fill="#888"/></svg>
<svg style="left:1053px;top:926px" width="8" height="10"><path d="M2 1 V9 L7 5Z" fill="#888"/></svg>
<!-- notes -->
<svg style="left:142px;top:948px" width="22" height="21"><path d="M2 2 H20 V15 H6 L2 19 Z M6 6 H16 M6 9 H16 M6 12 H12" stroke="#555" stroke-width="1.4" fill="none" stroke-linejoin="round"/></svg>
<div class="t" style="left:171px;top:949px;font-size:16.5px;color:#555">单击此处添加备注</div>

<!-- STATUS BAR -->
<div class="t" style="left:3px;top:989px;font-size:15px;color:#555">9</div>
<div class="a" style="left:26px;top:981px;width:1px;height:30px;background:#dedede"></div>
<div class="t" style="left:39px;top:989px;font-size:15px;color:#444">切片</div>
<div class="a" style="left:82px;top:981px;width:1px;height:30px;background:#dedede"></div>
<svg style="left:96px;top:984px" width="19" height="21"><path d="M9.5 1 L18 4 V11 C18 16 13 19 9.5 20 C6 19 1 16 1 11 V4 Z M6 7 L13 14 M13 7 L6 14" stroke="#777" stroke-width="1.3" fill="none" stroke-linejoin="round"/></svg>
<div class="t" style="left:120px;top:989px;font-size:15px;color:#444">文档未保护</div>
<div class="a" style="left:208px;top:981px;width:1px;height:30px;background:#dedede"></div>
<svg style="left:332px;top:983px" width="22" height="24"><path d="M11 1 L20 6 V17 L11 22 L2 17 V6 Z M6 9 L11 13 L16 9 V16" stroke="#e8743f" stroke-width="2" fill="none" stroke-linejoin="round"/></svg>
<div class="t" style="left:361px;top:989px;font-size:15px;color:#444">一键美化</div>
<svg style="left:425px;top:993px" width="7" height="5"><path d="M0 4 H7 L3.5 0Z" fill="#555"/></svg>
<svg style="left:499px;top:987px" width="32" height="18"><path d="M1 2 H19 M1 6 H19 M1 10 H19 M1 14 H12" stroke="#555" stroke-width="1.4"/><path d="M13 13 H19 L16 17Z" fill="#333"/><path d="M24 8 H30 L27 11Z" fill="#888"/></svg>
<div class="a" style="left:536px;top:981px;width:29px;height:29px;border-radius:4px;background:#c8c8c8"></div>
<svg style="left:540px;top:986px" width="21" height="19"><rect x="1" y="1" width="19" height="17" rx="1.5" stroke="#444" stroke-width="1.4" fill="none"/><path d="M7 1 V14 H20" stroke="#444" stroke-width="1.4" fill="none"/></svg>
<svg style="left:572px;top:986px" width="21" height="19"><rect x="1" y="1" width="8" height="7" rx="1.5" stroke="#444" stroke-width="1.3" fill="none"/><rect x="12" y="1" width="8" height="7" rx="1.5" stroke="#444" stroke-width="1.3" fill="none"/><rect x="1" y="11" width="8" height="7" rx="1.5" stroke="#444" stroke-width="1.3" fill="none"/><rect x="12" y="11" width="8" height="7" rx="1.5" stroke="#444" stroke-width="1.3" fill="none"/></svg>
<svg style="left:604px;top:986px" width="21" height="20"><path d="M10.5 3 C7 1 3 1 1 2 V17 C3 16 7 16 10.5 18 C14 16 18 16 20 17 V2 C18 1 14 1 10.5 3 V18" stroke="#444" stroke-width="1.3" fill="none" stroke-linejoin="round"/></svg>
<svg style="left:636px;top:986px" width="22" height="20"><path d="M12 2 H1 V14 H11 M6 14 V18 M3 18 H11" stroke="#444" stroke-width="1.3" fill="none"/><circle cx="15" cy="9" r="6" stroke="#444" stroke-width="1.3" fill="#f4f4f4"/><circle cx="15" cy="9" r="2.5" stroke="#444" stroke-width="1.3" fill="none"/></svg>
<div class="a" style="left:678px;top:981px;width:39px;height:30px;border-radius:4px;background:#f5785a"></div>
<svg style="left:690px;top:987px" width="15" height="18"><path d="M2 1 L14 9 L2 17 Z" fill="#fff"/></svg>
<svg style="left:722px;top:994px" width="7" height="4"><path d="M0 0 H7 L3.5 4Z" fill="#888"/></svg>
<div class="t" style="left:748px;top:988px;font-size:16px;color:#555">55%</div>
<svg style="left:785px;top:994px" width="7" height="4"><path d="M0 0 H7 L3.5 4Z" fill="#888"/></svg>
<div class="a" style="left:804px;top:995px;width:15px;height:2px;background:#444"></div>
<div class="a" style="left:833px;top:996px;width:172px;height:1px;background:#999"></div>
<div class="a" style="left:833px;top:995.5px;width:40px;height:1.5px;background:#444"></div>
<div class="a" style="left:918px;top:992px;width:1px;height:6px;background:#aaa"></div>
<div class="a" style="left:867px;top:988px;width:17px;height:17px;border-radius:50%;background:#f4f4f4;border:1.5px solid #444"></div>
<svg style="left:1017px;top:987px" width="17" height="17"><path d="M8.5 1 V16 M1 8.5 H16" stroke="#444" stroke-width="2"/></svg>
<svg style="left:1049px;top:987px" width="18" height="18"><path d="M1 5 V1 H5 M13 1 H17 V5 M17 13 V17 H13 M5 17 H1 V13" stroke="#444" stroke-width="1.5" fill="none"/><circle cx="9" cy="9" r="1" fill="#444"/></svg>


<!-- volume meter overlay (top-left) -->
<div class="a" style="left:0;top:59px;width:10px;height:35px;background:#5b83e0"></div>
<div class="a" style="left:2px;top:34px;width:12px;height:74px;border-radius:6px;background:#f4f4f4;opacity:.6"></div>
<div class="a" style="left:3px;top:35px;width:10px;height:71px;border-radius:5px;background:#555"></div>
<div class="a" style="left:4px;top:58px;width:8px;height:10px;background:#2e3d6a"></div>
<div class="a" style="left:4px;top:68px;width:8px;height:35px;background:repeating-linear-gradient(#3fd35a 0,#3fd35a 1.5px,#2a6a35 1.5px,#2a6a35 2.5px)"></div>

<!-- member panel -->
<div class="a" style="left:920px;top:237px;width:520px;height:451px;background:#fff;box-shadow:0 0 7px rgba(0,0,0,.28)"></div>
<div class="a" style="left:920px;top:237px;width:520px;height:37px;background:#f5f5f5"></div>
<div class="t" style="left:1196px;top:249px;font-size:15px;color:#222">成员(24人)</div>
<!-- row1 -->
<svg style="left:943px;top:287px" width="38" height="38"><defs><clipPath id="av1"><circle cx="19" cy="19" r="18.8"/></clipPath><linearGradient id="av1g" x1="0" y1="0" x2="0" y2="1"><stop offset="0" stop-color="#4a86d8"/><stop offset="1" stop-color="#2b5aa8"/></linearGradient></defs>
<g clip-path="url(#av1)"><rect width="38" height="38" fill="url(#av1g)"/>
<path d="M18 38 L16 30 H25 L24 38Z" fill="#d9a0c0"/>
<path d="M10 17 C10 28 14 32 19 32 C24 32 28 28 28 17Z" fill="#fdf6f6"/>
<path d="M4 18 L8 14 L3 10 L9 9 L7 3 L13 6 L15 1 L18 5 L24 1 L24 6 L31 6 L28 11 L34 13 L29 16 L33 21 L27 20 L28 26 L24 20 L21 23 L19 18 L15 24 L14 19 L10 26 L10 19 L6 22Z" fill="#fffbe8"/>
<path d="M22 10 L26 12 M24 15 L27 18" stroke="#8a6a50" stroke-width="0.8"/>
<rect x="12.5" y="20" width="3" height="2.6" fill="#1f4fc0"/><rect x="21" y="20" width="3" height="2.6" fill="#1f4fc0"/>
<path d="M14 16 L16 24 M23 16 L22 24" stroke="#c8a0c0" stroke-width="1"/>
</g></svg>
<div class="a" style="left:1430px;top:294px;width:14px;height:17px;border-radius:3px;background:#8e9097"></div>
<div class="a" style="left:1434px;top:315px;width:10px;height:3px;border-radius:2px;background:#8e9097"></div>
<div class="t" style="left:993px;top:298px;font-size:15px;color:#222">0436邓富萍<span style="color:#888">(主持人, 我)</span></div>
<!-- row2 -->
<svg style="left:943px;top:349px" width="40" height="40">
<circle cx="19" cy="20" r="16.5" fill="#f7b80a"/>
<path d="M11 38 C11 33 13 31 15 31 H24 C26 31 28 33 28 38Z" fill="#111"/><path d="M15 31 L19.5 38 L24 31Z" fill="#fff"/>
<path d="M9 24 C9 32 14 34 19.5 34 C25 34 30 32 30 24 V20 H9Z" fill="#fbdcb4" stroke="#222" stroke-width="0.9"/>
<ellipse cx="8.5" cy="25" rx="1.8" ry="2.5" fill="#fbdcb4" stroke="#222" stroke-width="0.8"/><ellipse cx="30.5" cy="25" rx="1.8" ry="2.5" fill="#fbdcb4" stroke="#222" stroke-width="0.8"/>
<path d="M10 20 C10 8 14 3 20 3 C27 3 30 9 30 19Z" fill="#fff" stroke="#111" stroke-width="1.2"/>
<path d="M10 20 C10 10 12 6 15 4.5 C13 9 13 14 13 19Z" fill="#111"/>
<path d="M12 21 C16 17 28 17 34 21 C30 23 16 23 12 21Z" fill="#c8202a" stroke="#111" stroke-width="0.8"/>
<path d="M15 9 L17 8 M23 9 L25 8" stroke="#d33" stroke-width="1.5"/>
<rect x="11.5" y="22" width="7.5" height="5.5" rx="1.8" fill="#fbe3c4" stroke="#111" stroke-width="1.1"/><rect x="21" y="22" width="7.5" height="5.5" rx="1.8" fill="#fbe3c4" stroke="#111" stroke-width="1.1"/>
<circle cx="15.5" cy="25" r="1.2" fill="#111"/><circle cx="24.5" cy="25" r="1.2" fill="#111"/>
</svg>
<div class="t" style="left:993px;top:361px;font-size:15px;color:#222">0427谭鑫</div>
<!-- row3 -->
<svg style="left:943px;top:413px" width="38" height="38"><defs><clipPath id="av3"><circle cx="19" cy="19" r="18.8"/></clipPath></defs>
<g clip-path="url(#av3)"><rect width="38" height="38" fill="#fff"/>
<circle cx="19" cy="19" r="18.5" fill="#1c1c14"/>
<path d="M5 22 C6 28 12 32 19 32 C26 32 32 28 33 22 V16 H5Z" fill="#f8e9d6"/>
<path d="M2 16 C2 4 10 0 19 0 C28 0 36 4 36 16 L33 24 L30 14 L27 22 L24 12 L21 24 L18 12 L15 22 L12 14 L9 24 L6 16 L4 24Z" fill="#3a4a2e"/>
<path d="M2 20 L6 26 L4 30Z M36 20 L32 26 L34 30Z" fill="#3a4a2e"/>
<ellipse cx="14" cy="23" rx="2.2" ry="1.8" fill="#3a4aa0"/><ellipse cx="24" cy="23" rx="2.2" ry="1.8" fill="#3a4aa0"/>
<path d="M5 9 L6 11 M32 10 L31 12" stroke="#dfe8df" stroke-width="1.2"/>
<path d="M10 38 L14 31 H24 L28 38Z" fill="#2a2a20"/><path d="M17 31 V38 H21 V31Z" fill="#fff"/>
<path d="M26 28 L38 26 L34 38Z" fill="#e23a30"/><circle cx="29" cy="30" r="1" fill="#ffd400"/>
</g></svg>
<div class="t" style="left:993px;top:424px;font-size:15px;color:#222">0422刘昆</div>
<!-- row4 -->
<svg style="left:943px;top:476px" width="38" height="38"><defs><clipPath id="av4"><circle cx="19" cy="19" r="18.8"/></clipPath><filter id="avb"><feGaussianBlur stdDeviation="0.8"/></filter></defs>
<g clip-path="url(#av4)"><rect width="38" height="38" fill="#9a7a50"/>
<g filter="url(#avb)">
<rect x="0" y="0" width="38" height="10" fill="#b59a70"/>
<rect x="28" y="10" width="10" height="20" fill="#d8c8a8"/>
<path d="M8 4 C12 0 18 2 20 6 L22 18 L16 22 C10 18 6 12 8 4Z" fill="#c9a282"/>
<path d="M16 4 L24 2 L28 30 L20 38 L14 36Z" fill="#252a22"/>
<path d="M20 10 L23 28 M24 8 L26 24" stroke="#5a8a5a" stroke-width="1.5"/>
<path d="M10 28 L14 38 H2 L4 30Z" fill="#3a3020"/>
<path d="M26 30 L38 28 V38 H24Z" fill="#2a3a2a"/>
</g></g></svg>
<div class="t" style="left:993px;top:487px;font-size:15px;color:#222">0405武祎</div>
<!-- row5 -->
<div class="a" style="left:943px;top:539px;width:38px;height:38px;border-radius:50%;background:#e2e2e2;overflow:hidden">
  <div class="a" style="left:11px;top:6px;width:16px;height:19px;border-radius:50%;background:#c3c3c3"></div>
  <div class="a" style="left:5px;top:25px;width:28px;height:20px;border-radius:12px 12px 0 0;background:#c3c3c3"></div>
</div>
<div class="t" style="left:993px;top:550px;font-size:15px;color:#222">0414陈建</div>
<!-- row6 clipped -->
<div class="a" style="left:943px;top:602px;width:38px;height:10px;overflow:hidden"><div class="a" style="left:0;top:0;width:38px;height:38px;border-radius:50%;background:#e2e2e2"><div class="a" style="left:11px;top:6px;width:16px;height:19px;border-radius:50%;background:#c3c3c3"></div></div></div>
<div class="a" style="left:920px;top:612px;width:520px;height:1px;background:#e3e3e3"></div>
<div class="a" style="left:1199px;top:635px;width:83px;height:28px;border:1px solid #d9d9d9;border-radius:2px"></div>
<div class="t" style="left:1210px;top:641px;font-size:15px;color:#1a78f0">全体静音</div>
<div class="a" style="left:1302px;top:635px;width:120px;height:28px;border:1px solid #d9d9d9;border-radius:2px"></div>
<div class="t" style="left:1317px;top:641px;font-size:15px;color:#1a78f0">解除全体静音</div>


<!-- TASKBAR -->
<div class="a" style="left:0;top:1030px;width:1440px;height:50px;background:#1e1e1e"></div>
<!-- TASKBAR ICONS -->
<svg style="left:20px;top:1044px" width="21" height="21"><path d="M0 3 L9 1.7 V9.6 H0 Z M10.2 1.5 L21 0 V9.6 H10.2 Z M0 10.8 H9 V18.7 L0 17.4 Z M10.2 10.8 H21 V20.5 L10.2 19 Z" fill="#fff"/></svg>
<svg style="left:79px;top:1044px" width="22" height="22"><circle cx="13" cy="9" r="7.5" stroke="#fff" stroke-width="1.6" fill="none"/><path d="M7.5 14.5 L1 21" stroke="#fff" stroke-width="1.8"/></svg>
<svg style="left:140px;top:1045px" width="21" height="20"><path d="M0.7 0 V3.3 H12.3 V0 M0.7 5.3 H12.3 V13.7 H0.7Z M0.7 19.5 V15.7 H12.3 V19.5 M18.5 0 V5 M18.5 10.5 V19.5" stroke="#fff" stroke-width="1.3" fill="none"/><rect x="16.9" y="6.3" width="3.2" height="3.2" fill="#fff"/></svg>
<svg style="left:200px;top:1042px" width="26" height="26"><g fill="#e8e8e8" stroke="#1e1e1e" stroke-width="1.2"><path d="M13 0.5 V13 H7 A6.5 6.5 0 0 1 7 0.5Z"/><path d="M25.5 13 H13 V7 A6.5 6.5 0 0 1 25.5 7Z"/><path d="M13 25.5 V13 H19 A6.5 6.5 0 0 1 19 25.5Z"/><path d="M0.5 13 H13 V19 A6.5 6.5 0 0 1 0.5 19Z"/></g></svg>
<svg style="left:268px;top:1041px" width="27" height="28"><path d="M25 17 H8 C8 22 12 25 17 25 C20 25 23 24 25 23 V27 C23 28 20 28 16 28 C7 28 1 23 1 15 C1 7 7 1 15 1 C22 1 26 6 26 13 V17Z M8 12 H19 C19 8 17 6 14 6 C11 6 9 8 8 12Z" fill="#0a7ad9"/></svg>
<svg style="left:329px;top:1041px" width="28" height="28"><circle cx="14" cy="14" r="13.5" fill="#db4437"/><path d="M14 14 L2.3 7.2 A13.5 13.5 0 0 0 14 27.5 Z" fill="#0f9d58"/><path d="M14 14 L14 27.5 A13.5 13.5 0 0 0 25.7 7.2 Z" fill="#f4b400"/><path d="M14 14 L2.3 7.2 A13.5 13.5 0 0 1 25.7 7.2Z" fill="#db4437"/><circle cx="14" cy="14" r="6.3" fill="#fff"/><circle cx="14" cy="14" r="4.8" fill="#4285f4"/></svg>
<svg style="left:391px;top:1040px" width="28" height="30"><circle cx="14" cy="15" r="13" fill="#5ec42a"/><path d="M7 15 H20 C20 11 17.5 9 14 9 C10 9 7 12 7 15.5 C7 19 10 22 14 22 C16.5 22 18.5 21 20 19.5" stroke="#fff" stroke-width="3" fill="none"/><path d="M3 24 C6 29 12 29 16 28" stroke="#3ca01a" stroke-width="1.5" fill="none"/><path d="M19 2 C23 1 26 2 27 4" stroke="#3ca01a" stroke-width="1.5" fill="none"/></svg>
<div class="a" style="left:453px;top:1040px;width:29px;height:30px;border-radius:50%;background:#111"></div>
<div class="a" style="left:455px;top:1041px;width:25px;height:17px;border-radius:50% 50% 20% 20%;background:#3d4a30"></div>
<div class="a" style="left:459px;top:1053px;width:17px;height:13px;border-radius:0 0 8px 8px;background:#f3dcc4"></div>
<div class="a" style="left:461px;top:1055px;width:4px;height:3px;background:#3a4a9a"></div>
<div class="a" style="left:469px;top:1055px;width:4px;height:3px;background:#3a4a9a"></div>
<svg style="left:514px;top:1041px" width="29" height="24"><path d="M1 3 C1 1.5 2 1 3 1 H11 L13 3.5 H27 C28 3.5 28.5 4 28.5 5 V22 C28.5 23 28 23.5 27 23.5 H2 C1.5 23.5 1 23 1 22Z" fill="#f3c13a"/><path d="M1 7 H28.5 V22 C28.5 23 28 23.5 27 23.5 H2 C1.5 23.5 1 23 1 22Z" fill="#fbd35c"/><path d="M8 23.5 V16 H21 V23.5 H17 V19 H12 V23.5Z" fill="#3a8ee0"/></svg>
<div class="a" style="left:578px;top:1041px;width:27px;height:27px;border-radius:4px;background:linear-gradient(#3593f5,#1b6fe0)"></div>
<svg style="left:583px;top:1048px" width="17" height="13"><path d="M1 1 L5.5 12 L8.5 5 L11.5 12 L16 1" stroke="#fff" stroke-width="2" fill="none" stroke-linejoin="round"/><path d="M3 1 H14" stroke="#fff" stroke-width="1.5"/></svg>
<div class="a" style="left:638px;top:1040px;width:30px;height:30px;background:linear-gradient(45deg,#0a4fe6,#0a6cf0 50%,#0ea4f8)"></div>
<svg style="left:641px;top:1048px" width="25" height="14"><path d="M2 12 L7 3 C8 1.5 9.5 1.5 10.5 3 L13 7 L15.5 3 C16.5 1.5 18 1.5 19 3 L23 11 C23.5 12 23 13 22 13 H16 L12.5 8 L9 13 H3 C2 13 1.5 12.5 2 12Z" fill="#fff" opacity="0.95"/><path d="M9 13 L12.5 8 L16 13Z" fill="#b9d6ff"/></svg>
<div class="a" style="left:441px;top:1077px;width:51px;height:3px;background:#76b9ed"></div>
<div class="a" style="left:503px;top:1077px;width:51px;height:3px;background:#76b9ed"></div>
<div class="a" style="left:565px;top:1077px;width:51px;height:3px;background:#76b9ed"></div>
<div class="a" style="left:627px;top:1077px;width:51px;height:3px;background:#76b9ed"></div>


</body></html>
